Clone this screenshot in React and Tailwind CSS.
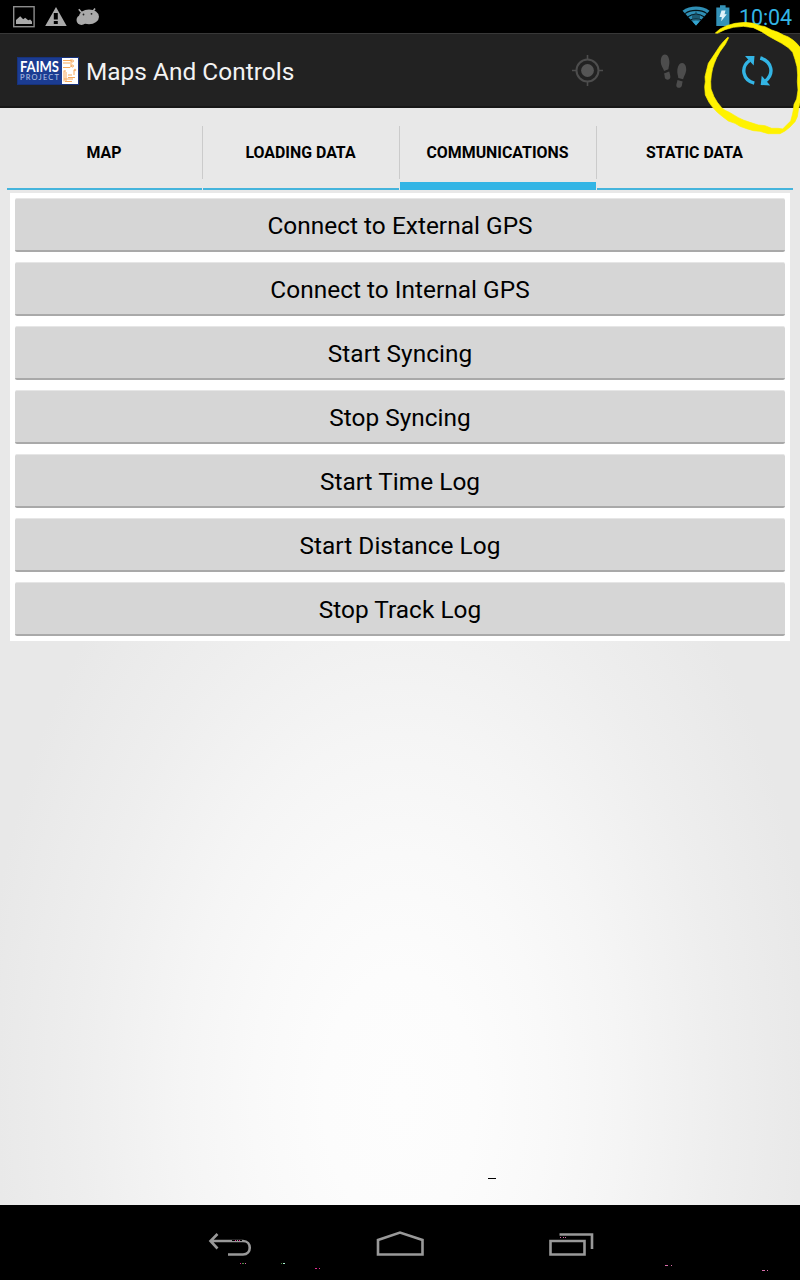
const TABS = [
  { label: 'MAP' },
  { label: 'LOADING DATA' },
  { label: 'COMMUNICATIONS', active: true },
  { label: 'STATIC DATA' },
];

const ACTIONS = [
  'Connect to External GPS',
  'Connect to Internal GPS',
  'Start Syncing',
  'Stop Syncing',
  'Start Time Log',
  'Start Distance Log',
  'Stop Track Log',
];

function NotificationIcons() {
  return (
    <svg width="110" height="33" viewBox="0 0 110 33" fill="#aaa">
      <rect x="13.700" y="6.700" width="20.400" height="20" fill="none" stroke="#8c8c8c" strokeWidth="1.400" />
      <path d="M16 24v-4l4.200-3.800 3 3 2-1.400 3 2.500 2-.8L32 21.500V24z" />
      <path fillRule="evenodd" d="M56 7 66.700 26H45.200zM53.800 13v6.500h4V13zM53.800 21v3h4v-3z" />
      <ellipse cx="89" cy="16.800" rx="10" ry="7.400" />
      <ellipse cx="81.500" cy="20" rx="5" ry="5" />
      <path d="M78.800 9.300 82 13M95 8.500 92.500 12" fill="none" stroke="#aaa" strokeWidth="1.600" />
      <circle cx="83.500" cy="14.500" r=".9" fill="#222" />
      <circle cx="91.500" cy="13.800" r=".9" fill="#222" />
    </svg>
  );
}

function WifiIcon() {
  return (
    <svg width="28" height="20" viewBox="0 0 28 20">
      <path d="M.5 4.700C8-.8 20-.8 27.500 4.700L14 19.500z" fill="#2f8fb5" />
      <path d="M3 7.600C9 3.300 19 3.300 25 7.600M6 10.700c5-3.200 11-3.200 16 0M8.700 14c3-2 7.600-2 10.600 0" fill="none" stroke="#041318" strokeWidth="1.100" />
      <path d="M14 4.500l1.500 4H18v6h-8v-6h2.500z" fill="#174a5d" opacity=".75" />
      <path d="M10.800 15.800q3.200-2 6.400 0L14 19.500z" fill="#33a5d0" />
    </svg>
  );
}

function BatteryIcon() {
  return (
    <svg width="14" height="21" viewBox="0 0 14 21">
      <path d="M.3 2.500h3.700V.3h5.600v2.200h3.800V21H.3z" fill="#3492b8" />
      <path d="M5.500 5.500h4L8.500 9.300h2.300L5.200 16.300l.6-4.200H3.500z" fill="#dff2f9" />
    </svg>
  );
}

function Logo() {
  return (
    <div className="flex h-[28px] w-[62px] shrink-0 border border-[#17327c] bg-white">
      <div className="w-[44px] bg-[#1b3c92]">
        <svg className="overflow-visible" width="44" height="26" viewBox="0 0 44 26" fontFamily="Lato, sans-serif">
          <text x="2" y="13.800" fontSize="14.500" fontWeight="700" textLength="39" lengthAdjust="spacingAndGlyphs" fill="#fff">FAIMS</text>
          <text x="2" y="22" fontSize="7.500" textLength="39" fill="#b9c5e6">PROJECT</text>
        </svg>
      </div>
      <svg width="16" height="26" viewBox="0 0 16 26" fill="none" stroke="#f7a95c" strokeWidth="1">
        <path d="M1 2.500h8M1 5h7M1 9.500h7l1-1M9 1v8M2 12.500v11M4 14v10M2 13h2M6 17h4M6 19.500h7M2 21h9M3 23.500h7M12 12v5" />
        <circle cx="10.500" cy="3" r="1" /><circle cx="10.500" cy="8" r="1" /><circle cx="13" cy="12" r=".8" />
      </svg>
    </div>
  );
}

function TargetIcon() {
  return (
    <svg width="32" height="32" viewBox="0 0 32 32" fill="none" stroke="#4d4d4d">
      <circle cx="16.500" cy="15.500" r="11" strokeWidth="2" />
      <circle cx="16.500" cy="15.500" r="6.400" fill="#555" stroke="none" />
      <path d="M16.500 0v5M16.500 26v5M1 15.500h5M27 15.500h5" strokeWidth="1.600" />
    </svg>
  );
}

function FootstepsIcon() {
  return (
    <svg width="27" height="35" viewBox="0 0 27 35" fill="#4d4d4d">
      <path d="M4.800.5C7.600.3 9.400 4 9.400 8c0 3-.6 4.500-1 7.200L4 17C3.200 13.500.8 12 .8 7.500.8 3.500 2.200.7 4.800.5z" />
      <path d="M4 19.500 9.200 17.500c.7 2.500 1.200 4 1.200 5.600 0 3.100-5 3.500-5.600.5-.2-1.300 0-2.400-.8-4.100z" />
      <path d="M22.200 9c2.600.2 4 2.800 4 6.300 0 4.300-2.100 6.200-3.100 10l-4.800-1.300c-.3-2.700-1.200-4.500-1-7.400C17.600 12.300 19.500 8.800 22.200 9z" />
      <path d="m17.500 26 5.200 1.400c-.6 1.900-.5 2.700-.8 4.200-.7 3.200-5.700 2.900-5.600-.2 0-1.500.8-3.300 1.200-5.400z" />
    </svg>
  );
}

function SyncIcon() {
  return (
    <svg width="32" height="32" viewBox="0 0 32 32">
      <path d="M13.300 28.200C2 25.500-1 12.500 8.500 5.500M19.300 3C31 6.500 33.500 18.500 24.500 26" fill="none" stroke="#33b5e5" strokeWidth="3.400" />
      <path d="M4 1h9.500l-.8 9.500zM20.700 20.700l8.500 9.800-9.500-.5z" fill="#33b5e5" />
    </svg>
  );
}

function Annotation() {
  return (
    <svg className="pointer-events-none absolute right-0 top-[15px]" width="100" height="125" viewBox="0 0 300 375" fill="#fff200" stroke="#fff200" strokeWidth="2">
      <path d="M86 68 76 88 60 110 50 128 43 145 38 160 34 180 32 200 33 222 42 245 52 262 65 278 75 286 88 292 100 299 115 308 130 315 150 322 175 330 195 332 215 340 235 340 248 342 262 328 272 318 277 300 280 285 282 268 290 252 294 225 292 200 293 180 291 155 285 133 278 112 265 98 245 85 225 74 205 63 185 50 160 38 130 34 100 37 75 44 52 55 46 54 60 42 80 32 105 25 135 22 160 25 180 32 195 35 215 45 235 52 250 60 265 66 280 76 290 85 302 99V255L296 280 292 305 285 320 270 336 255 348 240 356 205 356 180 349 160 347 140 341 120 334 105 325 85 318 68 305 52 292 38 277 27 262 16 240 14 215 16 200 15 185 20 165 25 145 35 130 45 115 60 92 70 80 83 67z" />
    </svg>
  );
}

function NavGlitches() {
  return (
    <>
      <path d="M232 35.500h5m1 0h4" stroke="#000" />
      <path d="M235 35.500h1m3 0h1M240 58.500h1M315 63.500h2m2 0h1" stroke="#e22c91" />
      <path d="M242 58.500h2M281 58.500h1" stroke="#4b8e40" />
      <path d="M245 58.500h1M560 32.500h1m2 0h1m1 0h1M665 60.500h3m3 0h1M762 65.500h3m2 0h1" stroke="#d86eaa" />
      <path d="M283 58.500h2" stroke="#a5efcd" />
    </>
  );
}

export default function App() {
  return (
    <div className="relative flex h-[1280px] w-[800px] flex-col overflow-hidden bg-black font-['Roboto',sans-serif] text-black">
      <header className="flex h-[33px] shrink-0 items-start justify-between bg-black pr-[8px]">
        <NotificationIcons />
        <div className="flex items-start">
          <div className="mr-[6px] pt-[6px]"><WifiIcon /></div>
          <div className="mr-[10px] pt-[5px]"><BatteryIcon /></div>
          <svg width="52" height="33" viewBox="0 0 52 33">
            <text x="-1" y="25" fontSize="21.500" textLength="53" fill="#33b5e5">10:04</text>
          </svg>
        </div>
      </header>

      <div className="flex h-[75px] shrink-0 items-center border-b-2 border-t border-b-[#171717] border-t-[#383838] bg-[#222] pl-[17px] pt-[2px]">
        <Logo />
        <h1 className="ml-[7px] w-[212px] whitespace-nowrap pt-[2px] text-[24.4px] leading-[28px] tracking-[0.03px] text-[#f3f3f3]">Maps And Controls</h1>
        <div className="ml-[273px] flex items-center">
          <TargetIcon />
          <div className="ml-[57px]"><FootstepsIcon /></div>
          <div className="ml-[54px]"><SyncIcon /></div>
        </div>
      </div>

      <main className="flex grow flex-col bg-[radial-gradient(ellipse_420px_700px_at_400px_990px,#fdfdfd_0%,#fcfcfc_18%,#f9f9f9_35%,#f5f5f5_52%,#eeeeee_76%,#e8e8e8_100%)]">
        <nav className="mx-[7px] flex h-[82px] shrink-0 gap-px">
          {TABS.map((tab, i) => (
            <div key={tab.label} className={i === 0 ? 'flex h-full w-[195px]' : 'flex h-full w-[196px]'}>
              {i > 0 && <span className="-ml-px mt-[18px] h-[53px] w-px shrink-0 bg-[#cbcbcb]" />}
              <button className={tab.active ? 'grow border-b-8 border-[#33b5e5] pr-[1px] pt-[15px] text-[15.9px] font-bold' : 'grow border-b-2 border-[#45b4dc] pr-[1px] pt-[9px] text-[15.9px] font-bold'}>
                {tab.label}
              </button>
            </div>
          ))}
        </nav>
        <section className="mx-[10px] mt-[3px] flex h-[448px] flex-col gap-[10px] bg-white px-[5px] pt-[5px]">
          {ACTIONS.map((label) => (
            <button key={label} className="h-[54px] shrink-0 rounded-[2px] border-b-2 border-t border-b-[#a9a9a9] border-t-[#e6e6e6] bg-[#d6d6d6] pt-[2px] text-[24.4px] leading-[28px] tracking-[0.03px]">
              {label}
            </button>
          ))}
        </section>
        <span className="ml-[488px] mt-[537px] h-px w-[8px] bg-black" />
      </main>

      <footer className="h-[75px] shrink-0 bg-black">
        <svg width="800" height="75" viewBox="0 0 800 75" fill="none" stroke="#999" strokeWidth="2.600">
          <path d="M217.500 29 210.500 36l7 7.500M210 36h33c9 0 9 13.500 0 13.500h-15" />
          <path d="M378 35 400 27.500 422.500 35v14.500H378z" />
          <path d="M550.500 36h34v13.500h-34zM559.500 29.500h32.500v14.500" />
          <g strokeWidth="1"><NavGlitches /></g>
        </svg>
      </footer>
      <Annotation />
    </div>
  );
}
